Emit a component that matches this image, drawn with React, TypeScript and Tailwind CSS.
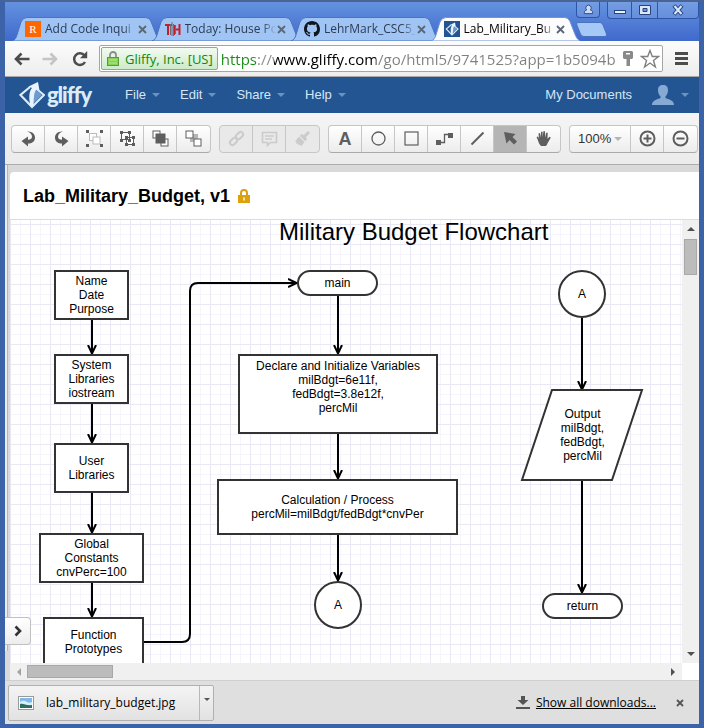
import React from "react";

type TabInfo = { title: string; icon: React.ReactNode; active?: boolean };

const GliffyMark = ({ className }: { className: string }) => (
  <svg viewBox="0 0 26 28" className={className} aria-hidden="true">
    <path d="M11 6 1.500 14 13 26 25 14 17 7.500" fill="none" stroke="#dcebfa" strokeWidth="2.200" />
    <path d="M16 8 23 14 14 23Z" fill="#6f9bcc" />
    <path d="M11.500 25C9.500 17 10 10 13 7L9.500 5.500 19 1 20.500 9.500 17.500 8C14.500 12 15 19 14.500 25Z" fill="#e8f3fd" />
  </svg>
);

const tabs: TabInfo[] = [
  {
    title: "Add Code Inqui",
    icon: (
      <span className="flex size-4 shrink-0 items-center justify-center bg-[#f60] font-['Liberation_Serif',serif] text-[11px] leading-4 text-white">
        R
      </span>
    ),
  },
  {
    title: "Today: House Po",
    icon: (
      <svg viewBox="0 0 16 16" className="size-4 shrink-0" aria-hidden="true">
        <path d="M0 4h7M3 4v10M9 4v10M14.500 3v11M9 8.500h5.500" fill="none" stroke="#c3202e" strokeWidth="2" />
        <path d="M5.500 3v11M7 1v14M8.500 3v12M10.500 4v9" stroke="#6b6b74" strokeWidth="1" />
      </svg>
    ),
  },
  {
    title: "LehrMark_CSC5_",
    icon: (
      <svg viewBox="0 0 16 16" className="size-4 shrink-0" aria-hidden="true">
        <path
          fill="#10161f"
          d="M8 0C3.580 0 0 3.580 0 8c0 3.540 2.290 6.530 5.470 7.590.4.070.55-.17.55-.38 0-.19-.01-.82-.01-1.490-2.010.37-2.530-.49-2.690-.94-.09-.23-.48-.94-.82-1.130-.28-.15-.68-.52-.01-.53.63-.01 1.080.58 1.230.82.72 1.210 1.870.87 2.330.66.07-.52.28-.87.51-1.070-1.780-.2-3.640-.89-3.640-3.950 0-.87.31-1.590.82-2.150-.08-.2-.36-1.020.08-2.120 0 0 .67-.21 2.200.82.64-.18 1.320-.27 2-.27s1.360.09 2 .27c1.530-1.040 2.200-.82 2.200-.82.44 1.100.16 1.920.08 2.120.51.56.82 1.270.82 2.150 0 3.070-1.870 3.750-3.650 3.950.29.25.54.73.54 1.480 0 1.070-.01 1.930-.01 2.200 0 .21.15.46.55.38A8 8 0 0 0 16 8c0-4.420-3.580-8-8-8z"
        />
      </svg>
    ),
  },
  {
    title: "Lab_Military_Bu",
    active: true,
    icon: (
      <span className="flex size-4 shrink-0 items-center justify-center bg-[#225591]">
        <GliffyMark className="size-[14px]" />
      </span>
    ),
  },
];

function Tab({ title, icon, active }: TabInfo) {
  return (
    <div className={`relative h-6 min-w-0 flex-1 ${active ? "z-10" : ""}`}>
      <svg
        viewBox="0 0 150 24"
        preserveAspectRatio="none"
        className="absolute inset-y-0 left-0 h-6 w-[107%]"
        aria-hidden="true"
      >
        <path
          d="M0 24C3 23 4 21 5 18L9 5Q11 .5 15 .5H134Q138 .5 139.500 4L145 18Q147 23 150 24Z"
          fill={active ? "#fcfcfd" : "#a0c4f4"}
          stroke={active ? "#6d93d6" : "#4a73bd"}
          strokeWidth="1"
        />
      </svg>
      <div className="relative flex h-6 items-center pr-1 pl-[13px]">
        {icon}
        <span
          className={`ml-1 min-w-0 flex-1 overflow-hidden text-[12px] leading-4 whitespace-nowrap [mask-image:linear-gradient(90deg,#000_85%,transparent)] ${
            active ? "text-black" : "text-[#2c3c56]"
          }`}
        >
          {title}
        </span>
        <button type="button" aria-label={`Close ${title}`} className="flex h-4 w-[11px] items-center justify-center">
          <svg viewBox="0 0 9 9" className="size-[9px]" aria-hidden="true">
            <path d="M1 1 8 8M8 1 1 8" stroke="#5c6675" strokeWidth="1.800" />
          </svg>
        </button>
      </div>
    </div>
  );
}

function WindowControls() {
  const cell = "flex h-4 items-center justify-center border-[#2d55a5]";
  return (
    <div className="flex gap-[7px]">
      <button type="button" aria-label="Profile" className={`${cell} w-6 rounded-b border border-t-0 bg-white/10`}>
        <svg viewBox="0 0 12 12" className="size-[11px]" aria-hidden="true">
          <path d="M1.500 10.500V9C1.500 7.500 3 7 4 6.500A3 3 0 1 1 8 6.500C9 7 10.500 7.500 10.500 9v1.500Z" fill="#c9dbf6" stroke="#27427c" />
        </svg>
      </button>
      <div className="flex rounded-b border border-t-0 border-[#2d55a5] bg-white/10">
        <button type="button" aria-label="Minimize" className={`${cell} w-6 border-r`}>
          <svg viewBox="0 0 12 12" className="size-3" aria-hidden="true">
            <rect x=".5" y="6.500" width="11" height="3" fill="#e8f0fc" stroke="#27427c" />
          </svg>
        </button>
        <button type="button" aria-label="Maximize" className={`${cell} w-[26px] border-r`}>
          <svg viewBox="0 0 12 12" className="size-3" aria-hidden="true">
            <path fillRule="evenodd" d="M.5 1.500h11v9H.5ZM4 4.500h4v3H4Z" fill="#dce8fa" stroke="#27427c" />
          </svg>
        </button>
        <button type="button" aria-label="Close" className={`${cell} w-[40px]`}>
          <svg viewBox="0 0 12 12" className="size-3" aria-hidden="true">
            <path d="M2 1.500 10 10.500M10 1.500 2 10.500" stroke="#27427c" strokeWidth="4" />
            <path d="M2.500 2 9.500 10M9.500 2 2.500 10" stroke="#dce8fa" strokeWidth="2" />
          </svg>
        </button>
      </div>
    </div>
  );
}

function AddressBar() {
  const nav = "flex size-5 items-center justify-center";
  return (
    <div className="flex h-9 items-center border-b border-[#a8a8a8] bg-gradient-to-b from-[#fcfcfd] to-[#ededee] pr-2 pl-[7px]">
      <button type="button" aria-label="Back" className={nav}>
        <svg viewBox="0 0 16 14" className="h-[14px] w-4" aria-hidden="true">
          <path d="M7.500 1.500 2 7l5.500 5.500M2 7h13.500" fill="none" stroke="#4c4c4c" strokeWidth="2.600" />
        </svg>
      </button>
      <button type="button" aria-label="Forward" className={`${nav} ml-2`}>
        <svg viewBox="0 0 16 14" className="h-[14px] w-4" aria-hidden="true">
          <path d="M8.500 1.500 14 7l-5.500 5.500M14 7H.5" fill="none" stroke="#c4c4c4" strokeWidth="2.600" />
        </svg>
      </button>
      <button type="button" aria-label="Reload" className={`${nav} ml-[10px]`}>
        <svg viewBox="0 0 16 16" className="size-4" aria-hidden="true">
          <path d="M13 11A5.800 5.800 0 1 1 12.500 4.500" fill="none" stroke="#4c4c4c" strokeWidth="2.500" />
          <path d="M15.200 0v7.200H8Z" fill="#4c4c4c" />
        </svg>
      </button>
      <div className="ml-[9px] flex h-[27px] min-w-0 flex-1 items-center rounded-xs border border-[#a5a5a5] bg-white px-px">
        <button
          type="button"
          className="flex h-[23px] shrink-0 items-center rounded-xs border border-[#7cb77c] bg-gradient-to-b from-[#f3fbf2] to-[#cdeacb] pr-1 pl-[5px] text-[13px] leading-5 whitespace-nowrap text-[#0b8a0b]"
        >
          <svg viewBox="0 0 12 15" className="mr-[6px] h-[15px] w-3" aria-hidden="true">
            <path d="M3 7V4a3 3 0 0 1 6 0v3" fill="none" stroke="#8d8d8d" strokeWidth="1.800" />
            <rect x=".5" y="6.500" width="11" height="8" fill="#86d354" stroke="#579c35" />
            <path d="M2 9h8M2 12h8" stroke="#b4ea8e" />
          </svg>
          Gliffy, Inc. [US]
        </button>
        <input
          type="text"
          aria-label="Address"
          defaultValue="https://www.gliffy.com/go/html5/9741525?app=1b5094b"
          className="ml-[3px] h-6 min-w-0 flex-1 bg-[linear-gradient(90deg,#178c17_37px,#8a8a8a_37px,#8a8a8a_53px,#000_53px,#000_155px,#808080_155px)] bg-clip-text p-0 text-[15px] leading-6 text-transparent outline-none"
        />
        <button type="button" aria-label="Saved passwords" className="ml-[6px] flex h-5 w-[10px] items-center">
          <svg viewBox="0 0 10 15" className="h-[15px] w-[10px]" aria-hidden="true">
            <path fillRule="evenodd" d="M1 0h8l1 1v6l-1 1H7v7H3.500V8H1L0 7V1ZM3 2v1.500h4V2Z" fill="#8a8a8a" />
          </svg>
        </button>
        <button type="button" aria-label="Bookmark" className="mr-[1px] ml-[7px] flex size-5 items-center">
          <svg viewBox="0 0 20 20" className="size-5" aria-hidden="true">
            <path d="m10 1.500 2.300 6h6.200l-5 4 1.900 6.500L10 14l-5.400 4 1.900-6.500-5-4h6.200Z" fill="#fff" stroke="#808080" strokeWidth="1.400" />
          </svg>
        </button>
      </div>
      <button type="button" aria-label="Menu" className="ml-[8px] flex w-5 items-center justify-center">
        <svg viewBox="0 0 13 13" className="size-[13px]" aria-hidden="true">
          <path d="M0 1.500h13M0 6.500h13M0 11.500h13" stroke="#4c4c4c" strokeWidth="3" />
        </svg>
      </button>
    </div>
  );
}

const Caret = ({ className }: { className: string }) => (
  <svg viewBox="0 0 8 4" className={`h-1 w-2 ${className}`} aria-hidden="true">
    <path d="M0 0h8L4 4Z" fill="currentColor" />
  </svg>
);

function AppBar() {
  return (
    <header className="flex h-9 items-center bg-[#225591] pr-[10px] pl-[14px] font-['Liberation_Sans',Arial,sans-serif] text-[13px] text-[#d6e6f7]">
      <a href="#home" aria-label="gliffy" className="flex items-center">
        <GliffyMark className="h-7 w-[26px]" />
        <span className="ml-[2px] font-[Lato,sans-serif] text-[22px] leading-6 font-black tracking-tighter text-[#dcebfa]">gliffy</span>
      </a>
      <nav className="ml-[34px] flex gap-5">
        {["File", "Edit", "Share", "Help"].map((name) => (
          <button key={name} type="button" className="flex items-center gap-[6px]">
            {name}
            <Caret className="text-[#6c93c0]" />
          </button>
        ))}
      </nav>
      <a href="#documents" className="ml-auto">
        My Documents
      </a>
      <button type="button" aria-label="Account" className="ml-5 flex items-center gap-[7px]">
        <svg viewBox="0 0 22 20" className="h-5 w-[22px]" aria-hidden="true">
          <path d="M11 0c3.500 0 5 2 5 5 0 3-1 5-2.500 6.500v1.500c3 1.500 8.500 2 8.500 7H0c0-5 5.500-5.500 8.500-7v-1.500C7 10 6 8 6 5c0-3 1.500-5 5-5Z" fill="#86aad3" />
        </svg>
        <Caret className="text-[#6c93c0]" />
      </button>
    </header>
  );
}

const ink = "#5e5e5e";
const handles = (x1: number, y1: number, x2: number, y2: number) =>
  [
    [x1, y1],
    [x2, y1],
    [x1, y2],
    [x2, y2],
  ].map(([x, y]) => <rect key={`${x}-${y}`} x={x} y={y} width="3" height="3" fill={ink} />);

const tools: Record<string, React.ReactNode> = {
  Undo: <path d="M7 1.500C12 1 15 4 15 7.500c0 4-3 6-7 6v3L1.500 11 8 6.500v3.200c2.500 0 4-1 4-3C12 4 10 2.500 7 1.500Z" fill={ink} />,
  Redo: <path d="M10 1.500C5 1 2 4 2 7.500c0 4 3 6 7 6v3l6.500-5.500L9 6.500v3.200c-2.500 0-4-1-4-3C5 4 7 2.500 10 1.500Z" fill={ink} />,
  Group: (
    <>
      <rect x="3.500" y="3.500" width="7" height="7" fill="#fff" stroke="#bbb" />
      <rect x="7" y="7" width="7" height="7" fill="#fff" stroke="#bbb" />
      {handles(0, 0, 14, 14)}
    </>
  ),
  Ungroup: (
    <>
      <path d="M2.500 2.500h8v7h-8ZM7.500 7.500h7v7h-7Z" fill="#fff" stroke={ink} />
      {handles(1, 1, 9, 9)}
      {handles(6, 6, 13, 13)}
    </>
  ),
  "Bring to front": (
    <>
      <rect x="1" y="1" width="7" height="7" fill="#fff" stroke={ink} />
      <rect x="9" y="9" width="7" height="7" fill="#fff" stroke={ink} />
      <rect x="3.500" y="3.500" width="10" height="10" fill={ink} />
    </>
  ),
  "Send to back": (
    <>
      <rect x="5" y="4" width="8" height="8" fill="#b5b5b5" />
      <rect x="1" y="1" width="7" height="7" fill="#fff" stroke={ink} />
      <rect x="9" y="9" width="7" height="7" fill="#fff" stroke={ink} />
    </>
  ),
  Link: (
    <g fill="none" stroke="#cbcbcb" strokeWidth="2">
      <rect x="7.500" y="3" width="8" height="5" rx="2.500" transform="rotate(-45 11.500 5.500)" />
      <rect x="1.500" y="9" width="8" height="5" rx="2.500" transform="rotate(-45 5.500 11.500)" />
    </g>
  ),
  Comment: (
    <>
      <path d="M1.500 2.500h14v10h-6l-3 3v-3h-5Z" fill="none" stroke="#cbcbcb" strokeWidth="1.600" />
      <path d="M4 6h9M4 9h7" stroke="#cbcbcb" strokeWidth="1.400" />
    </>
  ),
  "Format painter": <path d="M14 1l2 2-4 4 1 3-2 1-5-5 1-2 3 1ZM5 6.500l5.500 5.500L7 16.500l-1-2-1.500 1-.5-2-2 .5.500-2L1 11.500Z" fill="#cbcbcb" />,
  Text: <path d="M3 15 7.500 3h3L15 15h-3.500l-.8-2.500H7.200L6.400 15ZM8 10h2L9 6.500Z" fill={ink} fillRule="evenodd" />,
  Ellipse: <circle cx="8.500" cy="8.500" r="6.500" fill="none" stroke={ink} strokeWidth="1.300" />,
  Rectangle: <rect x="2" y="2" width="13" height="13" fill="none" stroke={ink} strokeWidth="1.200" />,
  Connector: (
    <>
      <path d="M3 12.500h5.500v-8H14" fill="none" stroke={ink} strokeWidth="1.300" />
      <rect x="0" y="10" width="5" height="5" fill={ink} />
      <rect x="12" y="3" width="5" height="5" fill={ink} />
    </>
  ),
  Line: <path d="M2.500 14.500 14.500 2.500" stroke={ink} strokeWidth="2" />,
  Select: <path d="m2 2 11.500 2-3 3 4.500 4.500-3 3-4.500-4.500-3 3.500Z" fill={ink} />,
  Pan: <path d="M4 8.500 3.500 3.500l1.500-.5 1 4.500V1.800h1.600v5.700L8.400 1.200H10l.2 6.300 1-4.800h1.500L12.500 8.800l2-2 1.300.7L13 12.500c-.8 1.500-1.500 3-2 3.500H6c-1.500-1.500-2.500-3.500-3-5.500L1.500 7 3 6.500Z" fill={ink} />,
  "Zoom in": (
    <g fill="none" stroke={ink} strokeWidth="2">
      <circle cx="8.500" cy="8.500" r="7" />
      <path d="M8.500 4.500v8M4.500 8.500h8" />
    </g>
  ),
  "Zoom out": (
    <g fill="none" stroke={ink} strokeWidth="2">
      <circle cx="8.500" cy="8.500" r="7" />
      <path d="M4.500 8.500h8" />
    </g>
  ),
};

function ToolButton({ name, disabled }: { name: string; disabled?: boolean }) {
  return (
    <button
      type="button"
      aria-label={name}
      disabled={disabled}
      className={`flex h-[26px] w-[33px] items-center justify-center ${name === "Select" ? "bg-[#b5b5b5]" : ""}`}
    >
      {name === "Text" ? (
        <span className="font-['Liberation_Sans',Arial,sans-serif] text-[18px] leading-6 font-bold text-[#5e5e5e]">A</span>
      ) : (
        <svg viewBox="0 0 17 17" className="size-[17px]" aria-hidden="true">
          {tools[name]}
        </svg>
      )}
    </button>
  );
}

function ToolGroup({ names, disabled, children }: { names: string[]; disabled?: boolean; children?: React.ReactNode }) {
  return (
    <div
      className={`flex shrink-0 divide-x divide-[#c6c6c6] rounded border border-[#c6c6c6] ${
        disabled ? "bg-[#e9e9e9]" : "border-b-[#aaa] bg-gradient-to-b from-white to-[#ececec]"
      }`}
    >
      {children}
      {names.map((n) => (
        <ToolButton key={n} name={n} disabled={disabled} />
      ))}
    </div>
  );
}

function Toolbar() {
  return (
    <div className="flex h-[52px] items-center gap-2 border-b border-[#adadad] bg-gradient-to-b from-[#f5f5f6] to-[#ebebeb] pl-[6px]">
      <ToolGroup names={["Undo", "Redo", "Group", "Ungroup", "Bring to front", "Send to back"]} />
      <ToolGroup names={["Link", "Comment", "Format painter"]} disabled />
      <ToolGroup names={["Text", "Ellipse", "Rectangle", "Connector", "Line", "Select", "Pan"]} />
      <ToolGroup names={["Zoom in", "Zoom out"]}>
        <label className="relative flex w-[61px] items-center">
          <select
            aria-label="Zoom level"
            className="h-[26px] w-full appearance-none bg-transparent pl-2 font-['Liberation_Sans',Arial,sans-serif] text-[13px] text-[#333] outline-none"
          >
            <option>100%</option>
          </select>
          <Caret className="pointer-events-none absolute right-2 text-[#b5b5b5]" />
        </label>
      </ToolGroup>
    </div>
  );
}

type DiagramNode = { lines: string[]; box: string };

const nodes: DiagramNode[] = [
  { lines: ["Name", "Date", "Purpose"], box: "left-[44px] top-[50px] h-[50px] w-[75px] border-2 bg-white" },
  { lines: ["System", "Libraries", "iostream"], box: "left-[44px] top-[134px] h-[50px] w-[75px] border-2 bg-white" },
  { lines: ["User", "Libraries"], box: "left-[44px] top-[223px] h-[50px] w-[75px] border-2 bg-white" },
  { lines: ["Global", "Constants", "cnvPerc=100"], box: "left-[29px] top-[313px] h-[50px] w-[105px] border-2 bg-white" },
  { lines: ["Function", "Prototypes"], box: "left-[33px] top-[397px] h-[50px] w-[101px] border-2 bg-white" },
  { lines: ["main"], box: "left-[287px] top-[50px] h-[26px] w-[81px] rounded-full border-2 bg-white" },
  {
    lines: ["Declare and Initialize Variables", "milBdgt=6e11f,", "fedBdgt=3.8e12f,", "percMil"],
    box: "left-[228px] top-[134px] h-[80px] w-[200px] border-2 bg-white pb-[14px]",
  },
  {
    lines: ["Calculation / Process", "percMil=milBdgt/fedBdgt*cnvPer"],
    box: "left-[207px] top-[259px] h-[56px] w-[241px] border-2 bg-white",
  },
  { lines: ["A"], box: "left-[304px] top-[361px] size-12 rounded-full border-2 bg-white" },
  { lines: ["A"], box: "left-[548px] top-[50px] size-12 rounded-full border-2 bg-white" },
  { lines: ["Output", "milBdgt,", "fedBdgt,", "percMil"], box: "left-[512px] top-[170px] h-[90px] w-[121px]" },
  { lines: ["return"], box: "left-[532px] top-[373px] h-[26px] w-[81px] rounded-full border-2 bg-white" },
];

const arrows = [
  "M82 100V133",
  "M82 184V222",
  "M82 273V312",
  "M82 363V396",
  "M328 76V133",
  "M328 214V258",
  "M328 315V360",
  "M572 98V169",
  "M572 260V372",
  "M134 422H172Q180 422 180 414V71Q180 63 188 63H286",
];

function Canvas() {
  return (
    <div className="relative min-w-0 flex-1 overflow-hidden bg-white font-['Liberation_Sans',Arial,sans-serif] text-black">
      <svg className="absolute inset-0 size-full" aria-hidden="true">
        <defs>
          <pattern id="grid" width="20" height="20" y="4" patternUnits="userSpaceOnUse">
            <path d="M10.500 0V20M0 10.500H20" stroke="#f5f5fb" />
            <path d="M.5 0V20M0 .5H20" stroke="#e9e9f5" />
          </pattern>
          <marker id="tip" viewBox="0 0 10 10" refX="8" refY="5" markerWidth="10" markerHeight="10" markerUnits="userSpaceOnUse" orient="auto">
            <path d="M0 1 8.500 5 0 9" fill="none" stroke="#000" strokeWidth="2" />
          </marker>
        </defs>
        <rect width="100%" height="100%" fill="url(#grid)" />
        {arrows.map((d) => (
          <path key={d} d={d} fill="none" stroke="#000" strokeWidth="2" markerEnd="url(#tip)" />
        ))}
        <path d="M542 170H632L602 260H512Z" fill="#fff" stroke="#333" strokeWidth="2" />
      </svg>
      <h2 className="absolute top-0 left-[269px] text-[24px] leading-6 whitespace-nowrap">Military Budget Flowchart</h2>
      {nodes.map(({ lines, box }) => (
        <div
          key={box}
          className={`absolute flex flex-col items-center justify-center border-[#333] text-[12px] leading-[14px] whitespace-nowrap ${box}`}
        >
          {lines.map((line) => (
            <span key={line}>{line}</span>
          ))}
        </div>
      ))}
    </div>
  );
}

const Arrow = ({ d }: { d: string }) => (
  <svg viewBox="0 0 8 8" className="size-2" aria-hidden="true">
    <path d={d} fill="#505050" />
  </svg>
);

function Workspace() {
  return (
    <main className="relative flex flex-1 flex-col bg-[#d9d9d9] pt-[7px] pl-[5px]">
      <div className="absolute top-0 bottom-[29px] left-0 w-[3px] border-r border-[#b5b5b5] bg-[#ececec]" />
      <div className="flex h-12 items-center rounded-tl border-b border-[#dcdcdc] bg-white pl-[13px]">
        <h1 className="font-['Liberation_Sans',Arial,sans-serif] text-[18px] leading-6 font-bold text-black">Lab_Military_Budget, v1</h1>
        <svg viewBox="0 0 12 14" className="ml-2 h-[14px] w-3" aria-hidden="true">
          <path d="M3 7V4a3 3 0 0 1 6 0v3" fill="none" stroke="#d99f10" strokeWidth="2" />
          <path fillRule="evenodd" d="M0 6h12v8H0ZM5.300 8.500v3h1.400v-3Z" fill="#dda10c" />
        </svg>
      </div>
      <div className="flex min-h-[443px] flex-1">
        <Canvas />
        <div className="flex w-[17px] flex-col items-center bg-[#f0f0f0] py-[5px]">
          <Arrow d="M0 6h8L4 2Z" />
          <div className="mt-[6px] h-9 w-[13px] border border-[#a8a8a8] bg-[#bcbcbc]" />
          <div className="flex-1" />
          <Arrow d="M0 2h8L4 6Z" />
        </div>
      </div>
      <div className="flex h-[17px]">
        <div className="flex flex-1 items-center bg-[#f0f0f0] px-[5px]">
          <svg viewBox="0 0 8 8" className="size-2" aria-hidden="true">
            <path d="M6 0v8L2 4Z" fill="#a3a3a3" />
          </svg>
          <div className="ml-1 h-[13px] w-[86px] border border-[#a8a8a8] bg-[#bcbcbc]" />
          <div className="flex-1" />
          <Arrow d="M2 0v8l4-4Z" />
        </div>
        <div className="w-[17px] bg-white" />
      </div>
      <button
        type="button"
        aria-label="Expand panel"
        className="absolute bottom-[35px] left-0 flex h-7 w-[26px] items-center justify-center rounded-r border border-l-0 border-[#c0c0c0] bg-gradient-to-b from-white to-[#ededed]"
      >
        <svg viewBox="0 0 8 12" className="h-3 w-2" aria-hidden="true">
          <path d="m1.500 1.500 4.500 4.500-4.500 4.500" fill="none" stroke="#333" strokeWidth="2.600" />
        </svg>
      </button>
    </main>
  );
}

function DownloadBar() {
  return (
    <footer className="flex h-11 items-center border-t border-[#cfcfcf] bg-[#dfdfdf] pr-[11px] pl-[3px] text-[12px] text-black">
      <div className="flex h-9 w-[206px] rounded-xs border border-[#b0b0b0] bg-gradient-to-b from-[#f4f4f4] to-[#e2e2e2]">
        <button type="button" className="flex flex-1 items-center pl-[9px]">
          <svg viewBox="0 0 16 14" className="mr-3 h-[14px] w-4" aria-hidden="true">
            <rect x=".5" y=".5" width="15" height="13" fill="#fff" stroke="#9a9a9a" />
            <rect x="2" y="2" width="12" height="10" fill="#7fb9ea" />
            <path d="M2 6c3-2 5-1 7 0s3 1 5 0v3H2Z" fill="#d9eefb" />
            <path d="M2 8c4-1 6 2 12 1v3H2Z" fill="#2c6f5c" />
          </svg>
          lab_military_budget.jpg
        </button>
        <button type="button" aria-label="Download options" className="flex w-[14px] items-start justify-center border-l border-[#b8b8b8] pt-3">
          <svg viewBox="0 0 6 3" className="h-[3px] w-[6px]" aria-hidden="true">
            <path d="M0 0h6L3 3Z" fill="#555" />
          </svg>
        </button>
      </div>
      <svg viewBox="0 0 14 13" className="mr-[6px] ml-auto h-[13px] w-[14px]" aria-hidden="true">
        <path d="M5 0h4v4h3.500L7 9 1.500 4H5ZM0 11h14v2H0Z" fill="#555" />
      </svg>
      <a href="#downloads" className="underline">
        Show all downloads...
      </a>
      <button type="button" aria-label="Close downloads bar" className="ml-4 flex size-4 items-center justify-center">
        <svg viewBox="0 0 8 8" className="size-2" aria-hidden="true">
          <path d="M1 1 7 7M7 1 1 7" stroke="#555" strokeWidth="1.800" />
        </svg>
      </button>
    </footer>
  );
}

export default function App() {
  return (
    <div className="flex min-h-screen flex-col border-x-[5px] border-t-2 border-b-4 border-x-[#3c62a8] border-t-[#4a6494] border-b-[#3c62a8] bg-[#dfdfdf] font-['Open_Sans','Noto_Sans',sans-serif]">
      <div className="relative flex h-[39px] items-start bg-gradient-to-b from-[#6492e0] to-[#4069cc] pl-[7px]">
        <div className="mt-[15px] flex min-w-0 flex-1 items-start">
          {tabs.map((t) => (
            <Tab key={t.title} {...t} />
          ))}
          <button type="button" aria-label="New tab" className="mt-[5px] ml-[6px] h-[15px] w-[31px]">
            <svg viewBox="0 0 31 15" className="h-[15px] w-[31px]" aria-hidden="true">
              <path d="M2 .5H24Q26 .5 27 3L30.500 12Q31 14.500 29 14.500H8Q5.500 14.500 4.500 12L.8 3Q0 .5 2 .5Z" fill="#a5c8f6" stroke="#4a73bd" />
            </svg>
          </button>
          <div className="w-[92px] shrink-0" />
        </div>
        <div className="absolute top-0 right-0">
          <WindowControls />
        </div>
      </div>
      <AddressBar />
      <AppBar />
      <Toolbar />
      <Workspace />
      <DownloadBar />
    </div>
  );
}
